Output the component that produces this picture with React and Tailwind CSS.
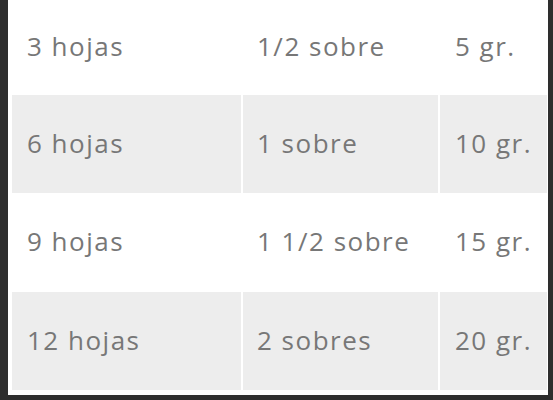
import React from "react";

const rows = [
  ["3 hojas", "1/2 sobre", "5 gr."],
  ["6 hojas", "1 sobre", "10 gr."],
  ["9 hojas", "1 1/2 sobre", "15 gr."],
  ["12 hojas", "2 sobres", "20 gr."],
];

const heights = ["h-[95px]", "h-[98px]", "h-[99px]", "h-[98px]"];

const App = () => {
  return (
    <div className="w-[553px] h-[400px] bg-[#2e2e2e] pl-[8px] pr-[5px] overflow-hidden">
      <div className="bg-white pl-[4px] pr-[1px] pb-[5px]">
        <div
          className="flex flex-col text-[26px] text-[#777777] tracking-[1.5px]"
          style={{ fontFamily: '"Open Sans", sans-serif' }}
        >
          {rows.map((r, i) => (
            <div
              key={i}
              className={`grid grid-cols-[229px_195px_1fr] gap-x-[2px] ${heights[i]}`}
            >
              <div className={`flex items-center pl-[15px] pb-[2px] ${i % 2 === 1 ? "bg-[#ededed]" : "bg-white"}`}>
                {r[0]}
              </div>
              <div className={`flex items-center pl-[14px] pb-[2px] ${i % 2 === 1 ? "bg-[#ededed]" : "bg-white"}`}>
                {r[1]}
              </div>
              <div className={`flex items-center pl-[15px] pb-[2px] ${i % 2 === 1 ? "bg-[#ededed]" : "bg-white"}`}>
                {r[2]}
              </div>
            </div>
          ))}
        </div>
      </div>
    </div>
  );
};

export default App;
